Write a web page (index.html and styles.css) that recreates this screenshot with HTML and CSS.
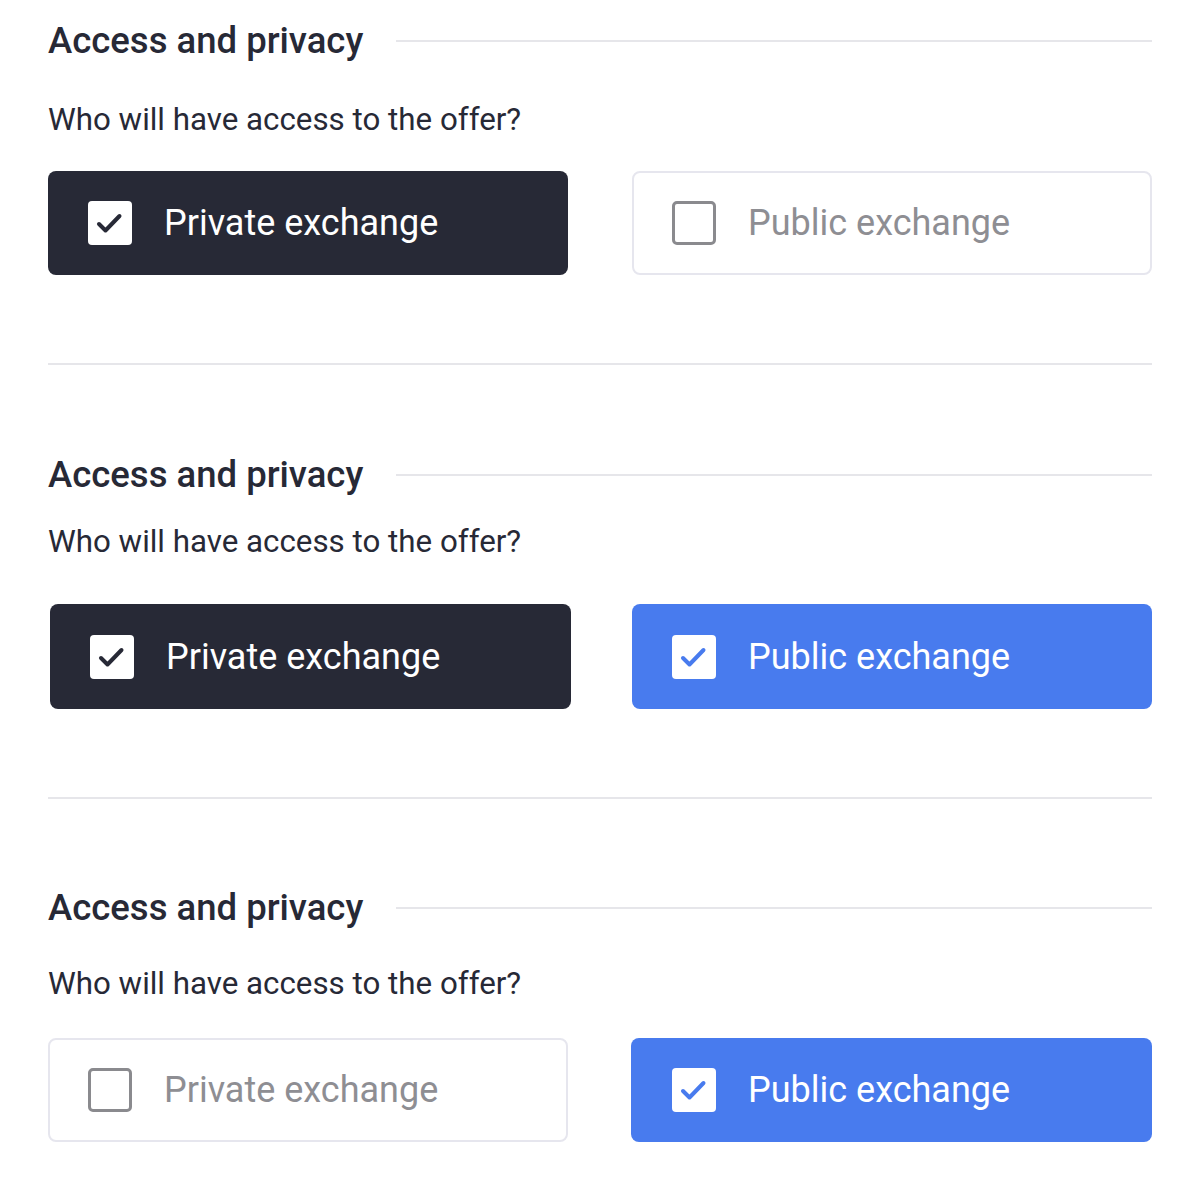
FILE: index.html
```html
<!DOCTYPE html>
<html lang="en">
<head>
<meta charset="utf-8">
<title>Access and privacy</title>
<link rel="stylesheet" href="styles.css">
</head>
<body>
<main class="page">
  <section class="block">
    <div class="block-head">
      <h2 class="block-title">Access and privacy</h2>
      <span class="block-rule"></span>
    </div>
    <p class="block-question">Who will have access to the offer?</p>
    <div class="options">
      <div class="option option--dark">
        <span class="box box--on"><svg viewBox="0 0 44 44" class="tick"><path d="M11 23l6.5 6.5 14-14.5"/></svg></span>
        <span class="option-label">Private exchange</span>
      </div>
      <div class="option option--off">
        <span class="box box--off"></span>
        <span class="option-label">Public exchange</span>
      </div>
    </div>
  </section>
  <hr class="divider">
  <section class="block block--second">
    <div class="block-head">
      <h2 class="block-title">Access and privacy</h2>
      <span class="block-rule"></span>
    </div>
    <p class="block-question">Who will have access to the offer?</p>
    <div class="options">
      <div class="option option--dark option--shift">
        <span class="box box--on"><svg viewBox="0 0 44 44" class="tick"><path d="M11 23l6.5 6.5 14-14.5"/></svg></span>
        <span class="option-label">Private exchange</span>
      </div>
      <div class="option option--blue">
        <span class="box box--on"><svg viewBox="0 0 44 44" class="tick tick--blue"><path d="M11 23l6.5 6.5 14-14.5"/></svg></span>
        <span class="option-label">Public exchange</span>
      </div>
    </div>
  </section>
  <hr class="divider">
  <section class="block block--third">
    <div class="block-head">
      <h2 class="block-title">Access and privacy</h2>
      <span class="block-rule"></span>
    </div>
    <p class="block-question">Who will have access to the offer?</p>
    <div class="options">
      <div class="option option--off">
        <span class="box box--off"></span>
        <span class="option-label">Private exchange</span>
      </div>
      <div class="option option--blue option--wide">
        <span class="box box--on"><svg viewBox="0 0 44 44" class="tick tick--blue"><path d="M11 23l6.5 6.5 14-14.5"/></svg></span>
        <span class="option-label">Public exchange</span>
      </div>
    </div>
  </section>
</main>
</body>
</html>
```
FILE: styles.css
```css
* { box-sizing: border-box; }
html, body { margin: 0; padding: 0; background: #ffffff; }
body {
  font-family: Roboto, "Liberation Sans", sans-serif;
  color: #272936;
}
.page {
  width: 1104px;
  margin-left: 48px;
  padding-top: 17px;
}
.block-head {
  display: flex;
  align-items: center;
  height: 48px;
}
.block-title {
  margin: 0;
  font-size: 36.5px;
  font-weight: 500;
  line-height: 48px;
  white-space: nowrap;
}
.block-rule {
  flex: 1;
  height: 2px;
  background: #e6e6ea;
  margin-left: 33px;
}
.block-question {
  margin: 37px 0 0;
  font-size: 31.3px;
  line-height: 36px;
  font-weight: 400;
}
.options {
  display: grid;
  grid-template-columns: 520px 520px;
  column-gap: 64px;
  margin-top: 33px;
}
.option {
  height: 104px;
  display: flex;
  align-items: center;
  padding-left: 40px;
  border-radius: 8px;
}
.option--dark { background: #272936; color: #ffffff; }
.option--blue { background: #487bee; color: #ffffff; }
.option--off {
  background: #ffffff;
  border: 2px solid #e6e6ee;
  padding-left: 38px;
  color: #8e8e93;
}
.option--shift { margin-left: 2px; margin-right: -3px; }
.option--wide { margin-left: -1px; padding-left: 41px; }
.option-label {
  font-size: 36px;
  line-height: 44px;
  margin-left: 32px;
}
.box {
  width: 44px;
  height: 44px;
  border-radius: 4px;
  flex: none;
  display: block;
}
.box--on { background: #ffffff; }
.box--off { border: 3px solid #8a8a8e; border-radius: 5px; }
.tick { width: 44px; height: 44px; display: block; }
.tick path {
  fill: none;
  stroke: #272936;
  stroke-width: 4;
  stroke-linecap: round;
  stroke-linejoin: round;
}
.tick--blue path { stroke: #487bee; }
.divider {
  border: 0;
  height: 2px;
  background: #e6e6ea;
  margin: 88px 0 0;
}
.block--second { margin-top: 86px; }
.block--third { margin-top: 85px; }
.block--second .block-question { margin-top: 25px; }
.block--second .options { margin-top: 44px; }
.block--second .option { height: 105px; }
.block--third .block-question { margin-top: 34px; }
.block--third .options { margin-top: 36px; }
```
